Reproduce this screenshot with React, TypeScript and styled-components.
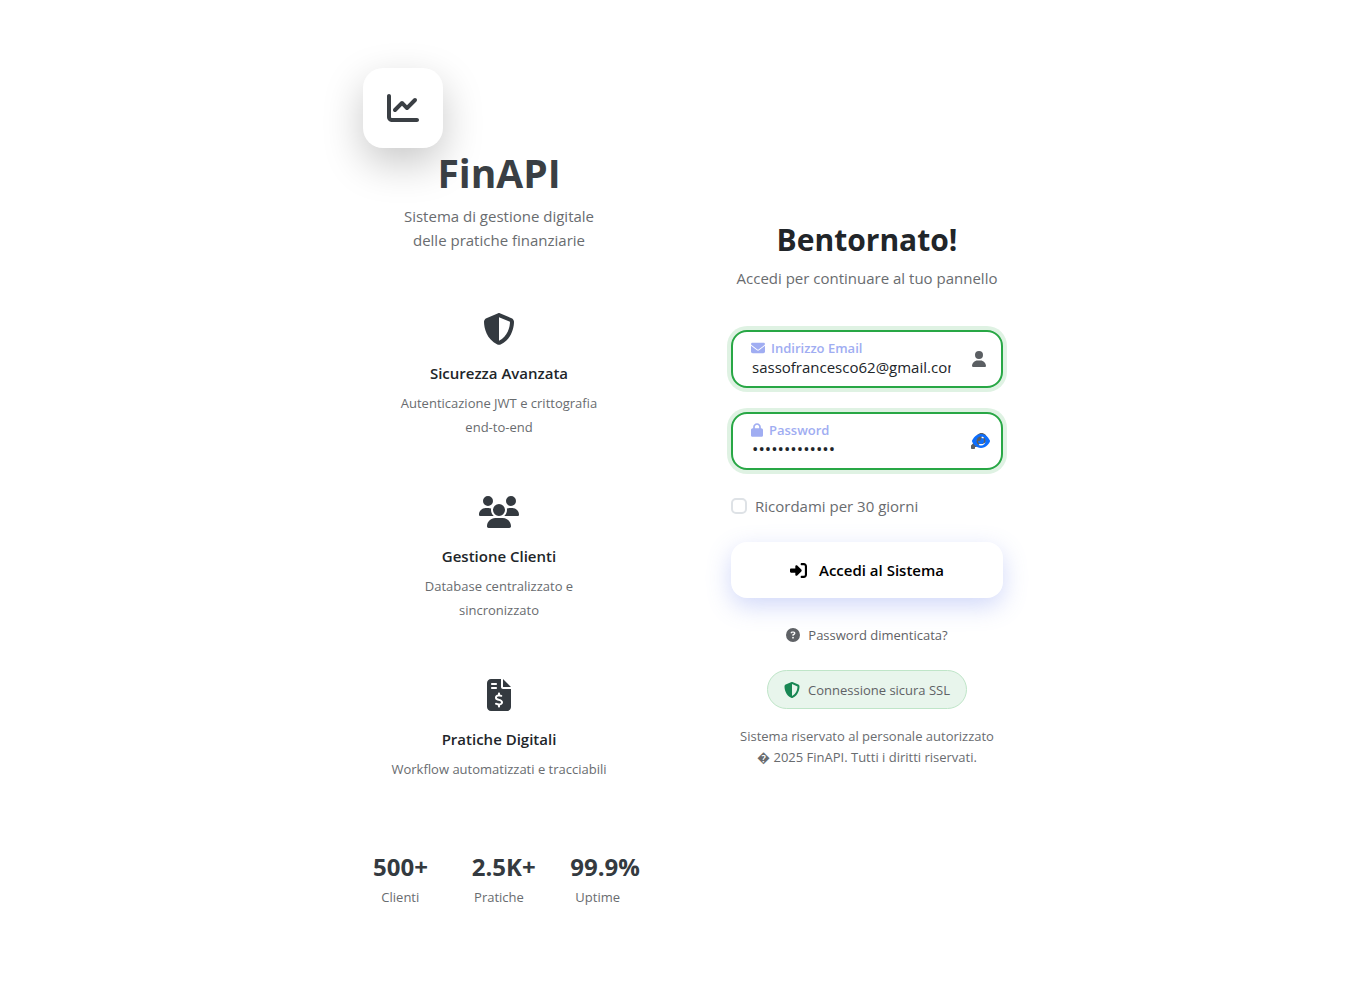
import React, { useState } from 'react';
import styled, { createGlobalStyle } from 'styled-components';
import {
  FaChartLine,
  FaCircleQuestion,
  FaEnvelope,
  FaEye,
  FaFileInvoiceDollar,
  FaKey,
  FaLock,
  FaRightToBracket,
  FaShieldHalved,
  FaUser,
  FaUsers,
} from 'react-icons/fa6';

const GlobalStyle = createGlobalStyle`
  *, *::before, *::after { box-sizing: border-box; }
  body {
    margin: 0;
    background: #fff;
    color: #212529;
    font-family: 'Segoe UI', 'Open Sans', 'Noto Sans', sans-serif;
    font-size: 15px;
    line-height: 24px;
  }
  h1, h2, h3, p { margin: 0; }
  button, input { font: inherit; color: inherit; }
`;

const Page = styled.div`
  min-height: 100vh;
  display: flex;
  align-items: center;
  justify-content: center;
`;

const Card = styled.main`
  width: 100%;
  max-width: 736px;
  display: grid;
  grid-template-columns: repeat(auto-fit, minmax(320px, 1fr));
`;

const Panel = styled.section`
  display: flex;
  flex-direction: column;
  justify-content: center;
  padding: 48px;
  text-align: center;
`;

const LogoTile = styled.div`
  width: 80px;
  height: 80px;
  display: grid;
  place-items: center;
  border-radius: 20px;
  background: #fff;
  box-shadow: 0 15px 40px rgba(0, 0, 0, 0.22);
  color: #3a3f44;
  font-size: 32px;
`;

const Brand = styled.h1`
  color: #3a3f44;
  font-size: 39px;
  font-weight: 700;
  line-height: 50px;
  margin-bottom: 6px;
`;

const Muted = styled.p`
  color: #696c6f;
`;

const Tagline = styled(Muted)`
  padding: 0 32px;
`;

const FeatureList = styled.div`
  display: flex;
  flex-direction: column;
  gap: 57px;
  margin: 61px 0 68px;
`;

const FeatureItem = styled.article`
  display: flex;
  flex-direction: column;
  align-items: center;
`;

const FeatureIcon = styled.span`
  display: flex;
  color: #343a40;

  svg {
    width: 40px;
    height: 32px;
  }
`;

const FeatureTitle = styled.h3`
  margin: 16px 0 6px;
  font-size: 15px;
  font-weight: 600;
  line-height: 24px;
`;

const FeatureText = styled(Muted)<{ $wide?: boolean }>`
  padding: 0 ${({ $wide }) => ($wide ? '0' : '32px')};
  font-size: 13px;
`;

const Stats = styled.div`
  display: grid;
  grid-template-columns: repeat(3, minmax(0, 1fr));
  margin: 0 -12px;
  padding-bottom: 10px;
`;

const Stat = styled.div`
  display: flex;
  flex-direction: column;
  padding: 0 22px;
  text-align: center;
`;

const StatValue = styled.strong`
  color: #343a40;
  font-size: 24px;
  font-weight: 700;
  line-height: 36px;
  text-align: left;
  white-space: nowrap;
`;

const StatLabel = styled(Muted).attrs({ as: 'span' })`
  font-size: 13px;
`;

const Heading = styled.h2`
  font-size: 30px;
  font-weight: 700;
  line-height: 44px;
  margin-bottom: 4px;
`;

const Form = styled.form`
  display: flex;
  flex-direction: column;
  gap: 24px;
  margin-top: 40px;
`;

const Field = styled.div`
  display: flex;
  align-items: center;
  height: 58px;
  padding: 0 14px 0 18px;
  border: 2px solid #28a745;
  border-radius: 16px;
  background: #fff;
  box-shadow: 0 0 0 4px rgba(40, 167, 69, 0.15);
`;

const FieldBody = styled.div`
  flex: 1;
  min-width: 0;
  display: flex;
  flex-direction: column;
  text-align: left;
`;

const FieldLabel = styled.label<{ $iconWidth: number }>`
  display: flex;
  align-items: center;
  gap: 6px;
  color: #a0adf2;
  font-size: 13px;
  font-weight: 600;
  line-height: 16px;

  svg {
    width: ${({ $iconWidth }) => $iconWidth}px;
    height: 14px;
  }
`;

const TextInput = styled.input`
  width: 200px;
  max-width: 100%;
  height: 22px;
  padding: 0 0 0 1px;
  border: 0;
  outline: 0;
  background: transparent;
  font-size: 15px;

  &[type='password'] { font-size: 17px; }
`;

const FieldMark = styled.span`
  display: flex;
  color: #5b5f63;
  font-size: 16px;
`;

const RevealButton = styled.button`
  position: relative;
  display: flex;
  margin-right: -2px;
  padding: 0 2px 0 0;
  border: 0;
  background: none;
  color: #5b5f63;
  font-size: 16px;
  cursor: pointer;
`;

const EyeMark = styled(FaEye)`
  position: absolute;
  right: -1px;
  top: 0;
  width: 18px;
  height: 16px;
  color: #0d6efd;
`;

const Remember = styled.label`
  display: flex;
  align-items: center;
  gap: 8px;
  color: #696c6f;
`;

const Checkbox = styled.input`
  appearance: none;
  width: 16px;
  height: 16px;
  margin: 0;
  border: 2px solid #dee2e6;
  border-radius: 5px;
  background: #fff;

  &:checked { background: #0d6efd; border-color: #0d6efd; }
`;

const SubmitButton = styled.button`
  display: flex;
  align-items: center;
  justify-content: center;
  gap: 12px;
  height: 56px;
  border: 0;
  border-radius: 16px;
  background: #fff;
  box-shadow: 0 8px 25px rgba(102, 126, 234, 0.3);
  color: #000;
  font-weight: 600;
  cursor: pointer;

  svg { font-size: 17px; }
`;

const HelpLink = styled.a`
  display: flex;
  align-items: center;
  justify-content: center;
  gap: 8px;
  margin: 25px 0 23px;
  color: #5f6266;
  font-size: 13px;
  text-decoration: none;

  svg { font-size: 14px; }
`;

const SecureBadge = styled.div`
  align-self: center;
  display: flex;
  align-items: center;
  gap: 8px;
  height: 39px;
  padding: 0 16px;
  border: 1px solid #bfe5c8;
  border-radius: 20px;
  background: #e8f5ec;
  color: #5f6266;
  font-size: 13px;

  svg { color: #198754; font-size: 16px; }
`;

const Legal = styled(Muted)`
  margin-top: 17px;
  font-size: 13px;
  line-height: 21px;
  white-space: nowrap;
`;

export default function App() {
  const [email, setEmail] = useState('sassofrancesco62@gmail.com');
  const [password, setPassword] = useState('Password12345');
  const [visible, setVisible] = useState(false);

  return (
    <>
      <GlobalStyle />
      <Page>
        <Card>
          <Panel>
            <LogoTile><FaChartLine /></LogoTile>
            <Brand>FinAPI</Brand>
            <Tagline>Sistema di gestione digitale delle pratiche finanziarie</Tagline>
            <FeatureList>
              <FeatureItem>
                <FeatureIcon><FaShieldHalved /></FeatureIcon>
                <FeatureTitle>Sicurezza Avanzata</FeatureTitle>
                <FeatureText>Autenticazione JWT e crittografia end-to-end</FeatureText>
              </FeatureItem>
              <FeatureItem>
                <FeatureIcon><FaUsers /></FeatureIcon>
                <FeatureTitle>Gestione Clienti</FeatureTitle>
                <FeatureText>Database centralizzato e sincronizzato</FeatureText>
              </FeatureItem>
              <FeatureItem>
                <FeatureIcon><FaFileInvoiceDollar /></FeatureIcon>
                <FeatureTitle>Pratiche Digitali</FeatureTitle>
                <FeatureText $wide>Workflow automatizzati e tracciabili</FeatureText>
              </FeatureItem>
            </FeatureList>
            <Stats>
              <Stat><StatValue>500+</StatValue><StatLabel>Clienti</StatLabel></Stat>
              <Stat><StatValue>2.5K+</StatValue><StatLabel>Pratiche</StatLabel></Stat>
              <Stat><StatValue>99.9%</StatValue><StatLabel>Uptime</StatLabel></Stat>
            </Stats>
          </Panel>

          <Panel>
            <Heading>Bentornato!</Heading>
            <Muted>Accedi per continuare al tuo pannello</Muted>
            <Form onSubmit={(e) => e.preventDefault()}>
              <Field>
                <FieldBody>
                  <FieldLabel htmlFor="email" $iconWidth={14}><FaEnvelope />Indirizzo Email</FieldLabel>
                  <TextInput id="email" type="email" value={email} onChange={(e) => setEmail(e.target.value)} />
                </FieldBody>
                <FieldMark><FaUser /></FieldMark>
              </Field>
              <Field>
                <FieldBody>
                  <FieldLabel htmlFor="password" $iconWidth={12}><FaLock />Password</FieldLabel>
                  <TextInput
                    id="password"
                    type={visible ? 'text' : 'password'}
                    value={password}
                    onChange={(e) => setPassword(e.target.value)}
                  />
                </FieldBody>
                <RevealButton type="button" aria-label="Mostra password" onClick={() => setVisible(!visible)}>
                  <FaKey />
                  <EyeMark />
                </RevealButton>
              </Field>
              <Remember><Checkbox type="checkbox" />Ricordami per 30 giorni</Remember>
              <SubmitButton type="submit"><FaRightToBracket />Accedi al Sistema</SubmitButton>
            </Form>
            <HelpLink href="#"><FaCircleQuestion />Password dimenticata?</HelpLink>
            <SecureBadge><FaShieldHalved />Connessione sicura SSL</SecureBadge>
            <Legal>Sistema riservato al personale autorizzato<br />{'\uFFFD'} 2025 FinAPI. Tutti i diritti riservati.</Legal>
          </Panel>
        </Card>
      </Page>
    </>
  );
}
